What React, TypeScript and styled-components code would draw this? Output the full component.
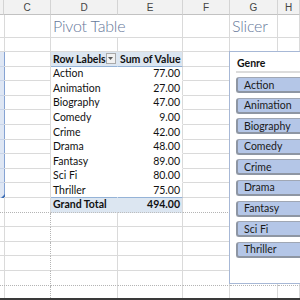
import React from 'react';
import styled, { createGlobalStyle, css } from 'styled-components';

const GlobalStyle = createGlobalStyle`
  html, body { margin: 0; padding: 0; background: #fff; }
  body { width: 300px; height: 300px; overflow: hidden; }
`;

const COLS = '4px 47px 67px 65px 47px 48px 22px';
const FONT = `'Lato', 'Liberation Sans', sans-serif`;

const Sheet = styled.div`
  position: relative;
  width: 300px;
  height: 300px;
  overflow: hidden;
  display: flex;
  flex-direction: column;
  font-family: ${FONT};
  font-size: 10.5px;
  color: #111;
  background: #fff;
`;

const ColHeaderRow = styled.div`
  display: grid;
  grid-template-columns: ${COLS};
  height: 15px;
  flex: none;
  background: #f2f2f2;
`;

const ColHeader = styled.div`
  box-sizing: border-box;
  border-right: 1px solid #d4d4d4;
  border-bottom: 1px solid #c2c2c2;
  display: flex;
  align-items: center;
  justify-content: center;
  font-size: 10px;
  color: #444;
  font-family: 'Liberation Sans', sans-serif;
`;

const Grid = styled.div`
  flex: 1;
  overflow: hidden;
  display: grid;
  grid-template-columns: ${COLS};
  grid-template-rows: 23px 14px repeat(20, 14.6px);
`;

type CellProps = {
  $sel?: boolean;
  $pv?: 'head' | 'body' | 'total';
  $right?: boolean;
  $noR?: boolean;
  $dotB?: boolean;
  $dotR?: boolean;
  $blueB?: boolean;
  $handle?: boolean;
};

const Cell = styled.div<CellProps>`
  position: relative;
  box-sizing: border-box;
  border-right: 1px solid #dadada;
  border-bottom: 1px solid #dadada;
  padding: 0 2px;
  display: flex;
  align-items: center;
  justify-content: ${(p) => (p.$right ? 'flex-end' : 'flex-start')};
  white-space: nowrap;
  line-height: 1;
  ${(p) =>
    p.$sel &&
    css`
      background: #dfe7f4;
      border-right-color: #86a3d3;
      border-bottom-color: #c9d5ea;
    `}
  ${(p) =>
    p.$pv === 'head' &&
    css`
      background: #dce6f1;
      font-weight: 700;
      border-bottom-color: #95b3d7;
    `}
  ${(p) =>
    p.$pv === 'body' &&
    css`
      background: #fff;
      border-bottom-color: #fff;
    `}
  ${(p) =>
    p.$pv === 'total' &&
    css`
      background: #dce6f1;
      font-weight: 700;
      border-bottom: 1px dotted #bdbdbd;
    `}
  ${(p) => p.$blueB && css`border-bottom-color: #95b3d7;`}
  ${(p) => p.$noR && css`border-right-color: transparent;`}
  ${(p) => p.$dotB && css`border-bottom: 1px dotted #b4b4b4;`}
  ${(p) => p.$dotR && css`border-right: 1px dotted #b4b4b4;`}
  ${(p) =>
    p.$handle &&
    css`
      &::after {
        content: '';
        position: absolute;
        right: -1px;
        bottom: -1px;
        width: 0;
        height: 0;
        border-left: 4px solid transparent;
        border-bottom: 4px solid #3f6fb5;
      }
    `}
`;

const TitleCell = styled(Cell)<{ $span?: number }>`
  grid-column: span ${(p) => p.$span ?? 1};
  align-items: flex-end;
  padding-bottom: 3px;
  font-size: 16px;
  font-weight: 300;
  color: #66789a;
  letter-spacing: -0.2px;
`;

const HeadLabel = styled.span`
  flex: 1;
`;

const FilterButton = styled.span`
  box-sizing: border-box;
  width: 11px;
  height: 11px;
  margin-right: -1px;
  border: 1px solid #a9a9a9;
  background: #f1f1f1;
  display: flex;
  align-items: center;
  justify-content: center;
`;

const Slicer = styled.div`
  position: absolute;
  left: 229px;
  top: 51px;
  width: 100px;
  height: 233px;
  box-sizing: border-box;
  border: 1px solid #a7b8d6;
  background: #fff;
  padding: 5px 0 0 6px;
  font-family: ${FONT};
`;

const SlicerTitle = styled.div`
  height: 12px;
  line-height: 12px;
  font-size: 10.5px;
  font-weight: 700;
  color: #111;
  padding-left: 1px;
`;

const SlicerRule = styled.div`
  margin-top: 2px;
  height: 2px;
  background: #dcdcdc;
`;

const ButtonList = styled.div`
  margin-top: 4px;
  display: flex;
  flex-direction: column;
  gap: 4.6px;
`;

const SlicerButton = styled.div`
  box-sizing: border-box;
  height: 16px;
  padding-left: 6px;
  display: flex;
  align-items: center;
  background: #b4c6e7;
  border: 1px solid #a0a7b4;
  border-left: 2px solid #8e96a3;
  border-bottom: 2px solid #8e96a3;
  border-radius: 3px;
  font-size: 10.5px;
  color: #1a1a1a;
`;

const BottomEdge = styled.div`
  flex: none;
  height: 2px;
  background: #3a3a3a;
`;

const rows: [string, string][] = [
  ['Action', '77.00'],
  ['Animation', '27.00'],
  ['Biography', '47.00'],
  ['Comedy', '9.00'],
  ['Crime', '42.00'],
  ['Drama', '48.00'],
  ['Fantasy', '89.00'],
  ['Sci Fi', '80.00'],
  ['Thriller', '75.00'],
];

const genres = rows.map((r) => r[0]);
const letters = ['', 'C', 'D', 'E', 'F', 'G', 'H'];

export default function App() {
  const below = [0, 1, 2, 3, 4, 5];
  return (
    <Sheet>
      <GlobalStyle />
      <ColHeaderRow>
        {letters.map((l, i) => (
          <ColHeader key={i}>{l}</ColHeader>
        ))}
      </ColHeaderRow>
      <Grid>
        {/* row 1: titles */}
        <Cell />
        <Cell />
        <TitleCell $span={2}>Pivot Table</TitleCell>
        <Cell />
        <TitleCell>Slicer</TitleCell>
        <Cell />
        {/* row 2 */}
        {[0, 1, 2, 3, 4, 5, 6].map((i) => (
          <Cell key={`r2-${i}`} />
        ))}
        {/* pivot header */}
        <Cell $sel />
        <Cell />
        <Cell $pv="head" $noR>
          <HeadLabel>Row Labels</HeadLabel>
          <FilterButton>
            <svg width="5" height="3" viewBox="0 0 5 3">
              <path d="M0 0 L5 0 L2.5 3 Z" fill="#595959" />
            </svg>
          </FilterButton>
        </Cell>
        <Cell $pv="head">Sum of Value</Cell>
        <Cell />
        <Cell />
        <Cell />
        {/* pivot body */}
        {rows.map(([label, value], i) => {
          const last = i === rows.length - 1;
          return (
            <React.Fragment key={label}>
              <Cell $sel $handle={last} />
              <Cell />
              <Cell $pv="body" $noR $blueB={last}>
                {label}
              </Cell>
              <Cell $pv="body" $right $blueB={last}>
                {value}
              </Cell>
              <Cell />
              <Cell />
              <Cell />
            </React.Fragment>
          );
        })}
        {/* grand total */}
        <Cell $dotB />
        <Cell $dotB />
        <Cell $pv="total" $noR>
          Grand Total
        </Cell>
        <Cell $pv="total" $right>
          494.00
        </Cell>
        <Cell $dotB />
        <Cell $dotB />
        <Cell $dotB />
        {/* rows below */}
        {below.map((r) => (
          <React.Fragment key={`b-${r}`}>
            {[0, 1, 2, 3, 4, 5, 6].map((c) => (
              <Cell key={c} $dotB={r === 4} $dotR={c === 1} />
            ))}
          </React.Fragment>
        ))}
      </Grid>
      <BottomEdge />
      <Slicer>
        <SlicerTitle>Genre</SlicerTitle>
        <SlicerRule />
        <ButtonList>
          {genres.map((g) => (
            <SlicerButton key={g}>{g}</SlicerButton>
          ))}
        </ButtonList>
      </Slicer>
    </Sheet>
  );
}
